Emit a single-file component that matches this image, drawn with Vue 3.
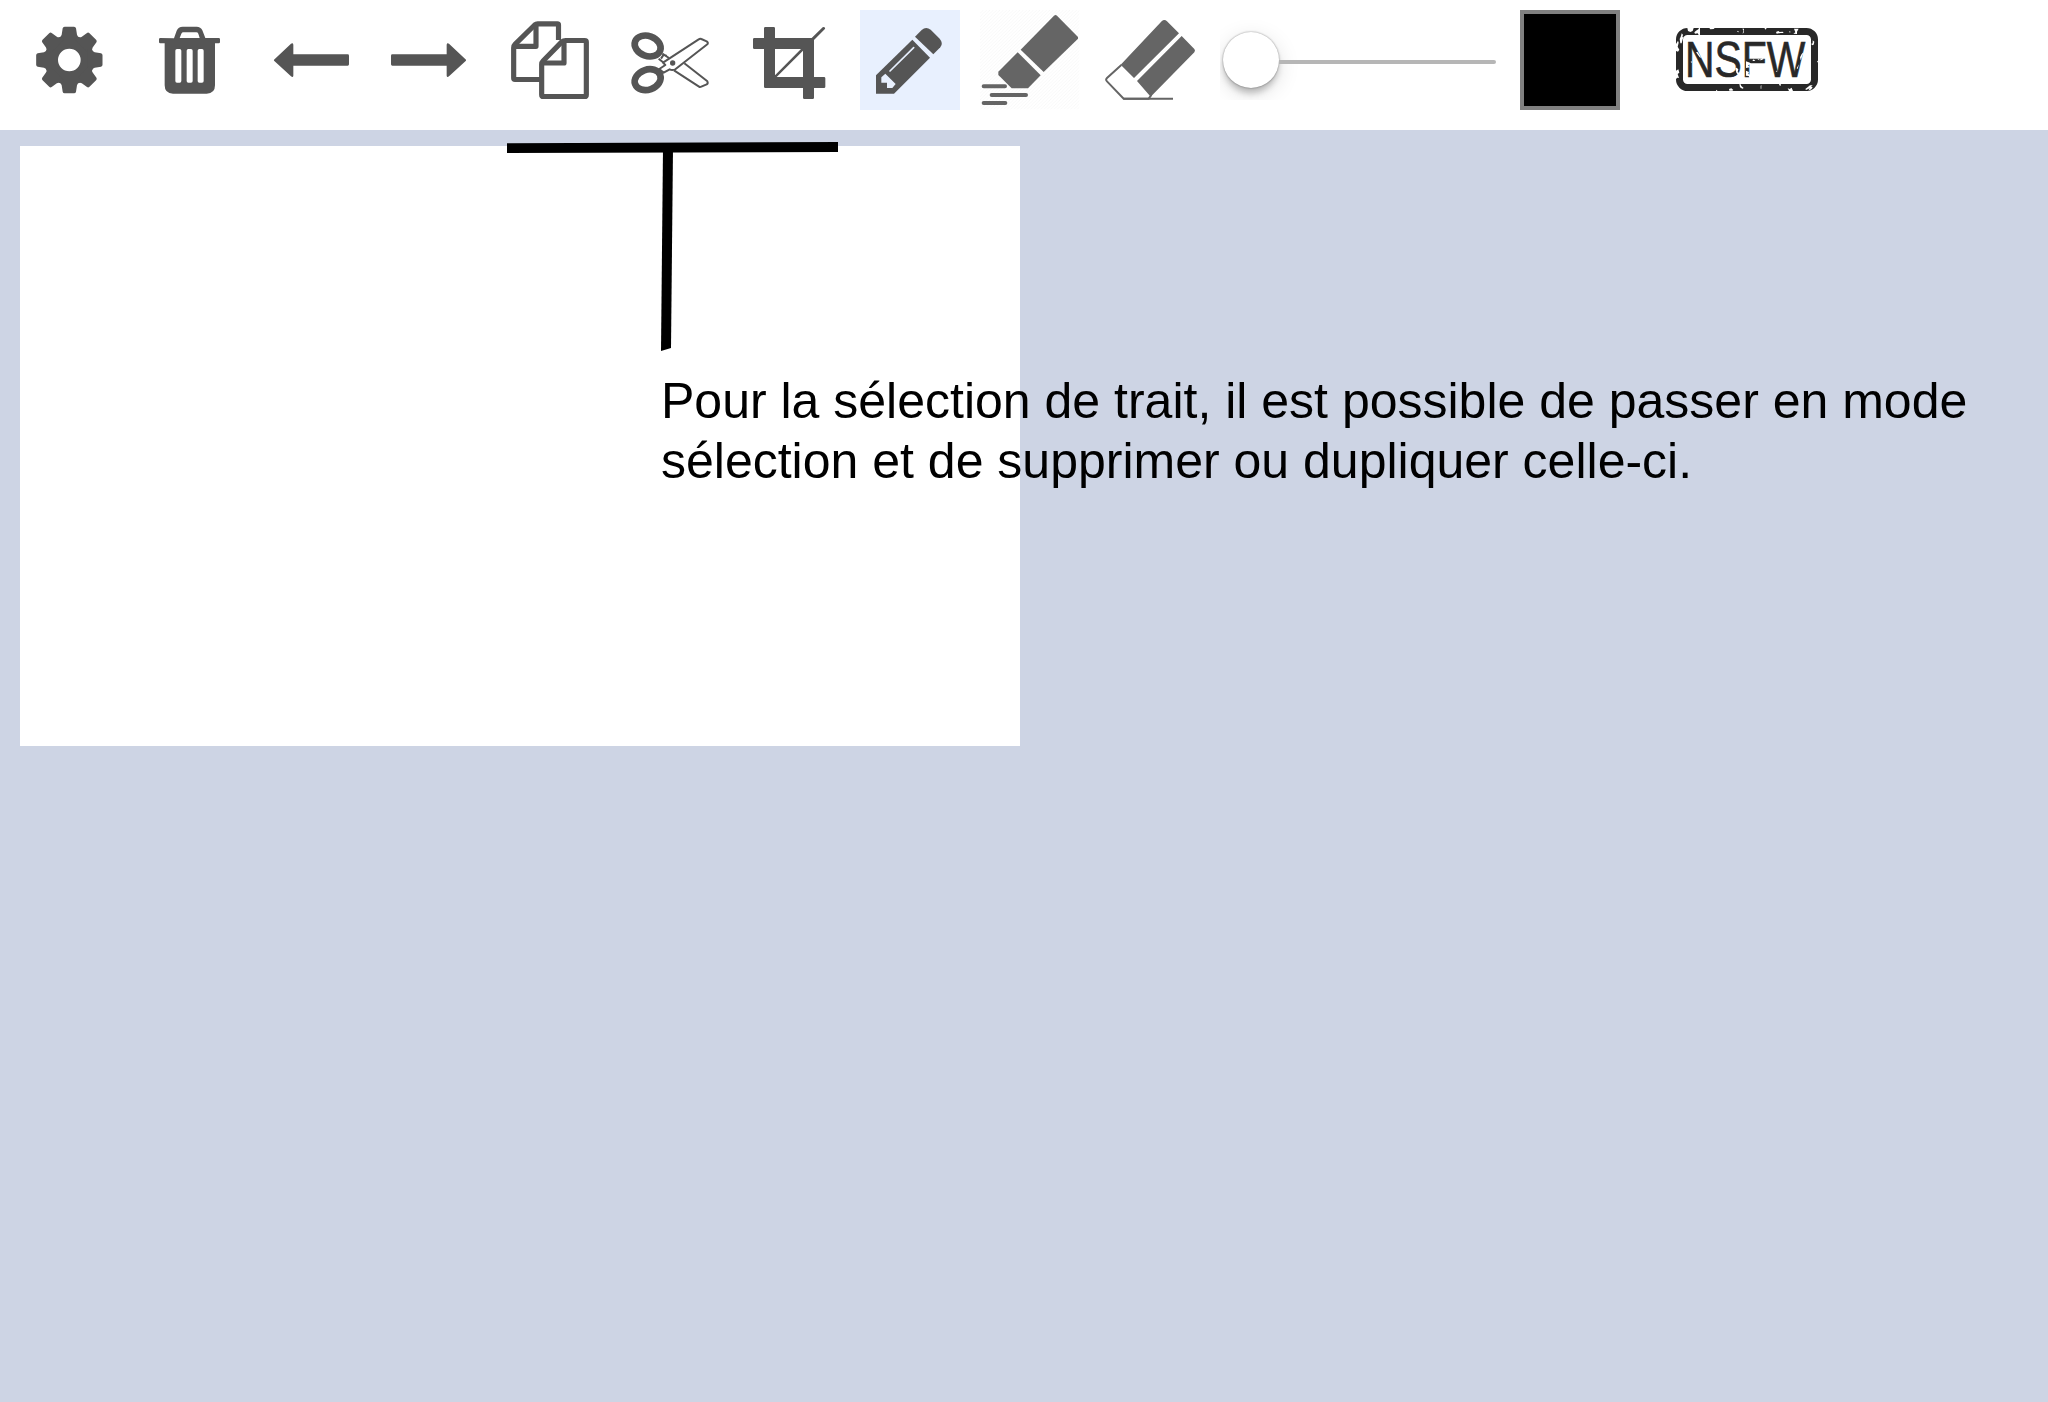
<script setup>
const teeth = [0, 45, 90, 135, 180, 225, 270, 315]
</script>

<template>
  <div class="app">
    <header class="toolbar">
      <button class="tool" aria-label="Paramètres">
        <svg viewBox="60 30 300 300">
          <circle cx="208" cy="180" r="53" fill="none" stroke="#555" stroke-width="38" />
          <path
            v-for="a in teeth"
            :key="a"
            :transform="`rotate(${a} 208 180)`"
            d="M194 80.500H222Q227 80.500 228 85L231 104Q232 110 240 113V125H176V113Q184 110 185 104L188 85Q189 80.500 194 80.500Z"
          />
        </svg>
      </button>
      <button class="tool" aria-label="Supprimer">
        <svg viewBox="420 30 300 300">
          <path
            fill-rule="evenodd"
            d="M522 115L530 92Q535 80 548 80H590Q602 80 607 91L616 114H656Q660 114 660 118V126Q660 130 656 130H645V256Q645 281 620 281H519Q494 281 494 256V130H481Q477 130 477 126V118Q477 114 481 114ZM539 114H599L595 101Q593 97 589 97H550Q546 97 544 101ZM531 147Q526 147 526 152V243Q526 248 531 248H539Q544 248 544 243V152Q544 147 539 147ZM565 147Q560 147 560 152V243Q560 248 565 248H573Q578 248 578 243V152Q578 147 573 147ZM598 147Q593 147 593 152V243Q593 248 598 248H606Q611 248 611 243V152Q611 147 606 147Z"
          />
        </svg>
      </button>
      <button class="tool" aria-label="Annuler">
        <svg viewBox="60 30 300 300">
          <path d="M102 179L153 131Q159 127 160 134V163H323Q327 163 327 167V193Q327 197 323 197H160V227Q159 234 153 229L103 183Q101 181 102 179Z" />
        </svg>
      </button>
      <button class="tool" aria-label="Rétablir">
        <svg viewBox="420 30 300 300">
          <path d="M678 179L627 131Q621 127 620 134V163H457Q453 163 453 167V193Q453 197 457 197H620V227Q621 234 627 229L677 183Q679 181 678 179Z" />
        </svg>
      </button>
      <button class="tool" aria-label="Dupliquer">
        <svg viewBox="60 30 300 300">
          <g fill="none" stroke="#555" stroke-width="15.500" stroke-linejoin="round">
            <path d="M235.500 120V75Q235.500 71.500 232 71.500H173Q168 71.500 164 75L105 133Q101 137 101 143V234Q101 238.500 105 238.500H180" />
            <path d="M168 76V139H105" />
            <path d="M257 121.500H314Q319 121.500 319 126V284Q319 289.500 314 289.500H190Q185 289.500 185 284V193Q185 187 189 183L246 125Q250 121.500 257 121.500Z" fill="#fff" />
            <path d="M252 126V189H189" />
          </g>
        </svg>
      </button>
      <button class="tool" aria-label="Couper">
        <svg viewBox="420 30 300 300">
          <g fill="none" stroke="#555" stroke-linejoin="round">
            <path d="M582 211L657 260Q660 262 664 260L680 253Q685 250 682 244L613 190" stroke-width="6" />
            <path d="M536 176L551 188M547 161L567 174M543 176L551 164L560 168" stroke-width="6" />
            <path d="M549 188L656 118Q660 115 664 117L680 124Q686 128 682 133L607 191L586 208Q576 212 569 208L551 218L538 207L556 195Z" fill="#fff" stroke-width="6" />
            <ellipse cx="503" cy="138" rx="40" ry="30" transform="rotate(20 503 138)" stroke-width="20" />
            <ellipse cx="503" cy="239" rx="40" ry="30" transform="rotate(-20 503 239)" stroke-width="20" />
          </g>
          <circle cx="578" cy="189" r="8" />
        </svg>
      </button>
      <button class="tool" aria-label="Recadrer">
        <svg viewBox="60 30 300 300">
          <path
            fill-rule="evenodd"
            d="M132 114V85Q132 81 136 81H161Q165 81 165 85V114H275L308 82Q312 80 315 83Q316 86 314 88L282 120V231H312Q316 231 316 235V260Q316 264 312 264H282V293Q282 297 278 297H253Q249 297 249 293V264H136Q132 264 132 260V147H103Q99 147 99 143V118Q99 114 103 114ZM165 147V226L243 147ZM249 152L170 231H249Z"
          />
        </svg>
      </button>
      <button class="tool active" aria-label="Crayon">
        <svg viewBox="420 30 300 300">
          <path d="M585 110L605 90Q618 78 632 89L659 116Q671 130 661 142L640 163Z" />
          <path d="M577 119L630 173L522 281H468V226Z" />
          <path d="M510 213L581 143" stroke="#e8f0fe" stroke-width="5" stroke-linecap="round" />
          <path d="M496 221L527 252L517 264H501V248H484V232Z" fill="#e8f0fe" />
        </svg>
      </button>
      <button class="tool" aria-label="Surligneur">
        <svg viewBox="60 30 300 300">
          <defs>
            <pattern id="hatch" width="10" height="10" patternUnits="userSpaceOnUse">
              <path d="M-1 11L11 -1" stroke="#f5f5f5" stroke-width="2" />
            </pattern>
          </defs>
          <path d="M60 30H358V328H60Z" fill="url(#hatch)" />
          <g fill="#656565">
            <path d="M182 149L282 47Q287 43 291 47L354 111V116L251 216Z" />
            <path d="M173 157L242 226L204 265H155L115 225V215Z" />
          </g>
          <path d="M71 259H135M95 285H198M71 309H136" stroke="#656565" stroke-width="12" stroke-linecap="round" />
        </svg>
      </button>
      <button class="tool" aria-label="Gomme">
        <svg viewBox="420 30 300 300">
          <path d="M484 195L441 234Q436 239 441 244L491 296H566L574 285" fill="none" stroke="#656565" stroke-width="6" />
          <path d="M490 296H639" stroke="#656565" stroke-width="6" />
          <g fill="#656565">
            <path d="M482 194L605 64Q613 56 621 64L657 100L522 234Z" />
            <path d="M665 108L703 147Q707 151 703 157L572 290L531 243Z" />
          </g>
        </svg>
      </button>
      <div class="slider"><span class="thumb"></span><span class="track"></span></div>
      <div class="swatch"></div>
      <svg class="stamp" viewBox="528 84 426 189">
        <rect x="538.500" y="94.500" width="405" height="168" rx="24" fill="none" stroke="#282828" stroke-width="21" />
        <text transform="translate(555 231) scale(0.807 1)">NSFW</text>
        <g fill="#fff">
          <path d="M528 132L534 122L536 128L533 140L538 149L534 155L528 153ZM539 117L543 108L545 100L549 104L547 112L551 110L548 118L545 130L541 130ZM562 84H581L578 93L571 96L564 93ZM583 97L588 92L595 88L597 84H600V105H596L593 100L585 101Z" />
          <path d="M628 84H644L641 87L631 88ZM727 86L730 91L728 101L731 98L732 86ZM711 95L714 92L717 97ZM793 84L797 89L800 84ZM828 96L835 93L839 96L848 95L851 99L842 99L830 101ZM868 92L872 96L869 98ZM882 86H896L891 95L891 102L880 101L886 97Z" />
          <path d="M938 121L943 125L941 134L936 136L934 131L938 130ZM951 184L954 182V188ZM528 212L535 208L538 218L533 222L537 234L532 233L528 237Z" />
          <path d="M648 273V269L653 273ZM687 267L694 265L700 270L697 272H688ZM718 251H721L724 258L731 264L727 266L720 262ZM782 257L784 255V266H782ZM837 251L843 246L842 258L838 256ZM863 265L869 267L875 263L879 273H867ZM916 267L930 256L938 256L933 261L938 261L934 268L925 272L929 265L918 270Z" />
          <path d="M588 157L593 156L604 173L599 172ZM582 171L584 169L583 178L592 178L582 181ZM572 185L576 184L574 190ZM584 202L588 196L592 201L586 205ZM706 205L710 203L715 208L713 216L718 220L714 224L709 218Z" />
          <path d="M738 184L750 188L753 192L744 196L750 202L738 204ZM757 183L761 178L766 183ZM773 176L779 180L788 174L791 177L783 181L774 180ZM738 212L747 216L745 222L753 225L759 220L761 233H749L746 228L738 227ZM900 172L905 162L911 157L906 170L902 181ZM890 205L897 193L893 207ZM827 213L832 212L831 216Z" />
        </g>
      </svg>
    </header>
    <main class="workspace">
      <div class="canvas"></div>
      <svg class="callout" width="340" height="220" viewBox="503 136 340 220">
        <path d="M507 143.300L838 142V152L507 153Z" />
        <path d="M663 148H673L671 348L661 351Z" />
      </svg>
      <p class="note">Pour la sélection de trait, il est possible de passer en mode<br />sélection et de supprimer ou dupliquer celle-ci.</p>
    </main>
  </div>
</template>

<style>
body {
  margin: 0;
}
</style>

<style scoped>
.app {
  display: flex;
  flex-direction: column;
  width: 2048px;
  height: 1402px;
  overflow: hidden;
  background: #cdd4e4;
  font-family: "Liberation Sans", Arial, sans-serif;
}
.toolbar {
  display: flex;
  align-items: center;
  gap: 20px;
  height: 130px;
  box-sizing: border-box;
  padding: 0 20px 10px;
  background: #fff;
}
.tool {
  flex: none;
  width: 100px;
  height: 100px;
  padding: 0;
  border: 0;
  background: none;
}
.tool.active {
  background: #e8f0fe;
}
.tool svg {
  display: block;
  width: 100px;
  height: 100px;
  fill: #555;
}
.slider {
  display: flex;
  align-items: center;
  flex: none;
  width: 280px;
  height: 80px;
  overflow: hidden;
}
.thumb {
  flex: none;
  width: 56px;
  height: 56px;
  margin-left: 3px;
  border-radius: 50%;
  background: #fff;
  box-shadow: 0 0 2px rgba(0, 0, 0, 0.45), 0 6px 6px -1px rgba(0, 0, 0, 0.22), 0 6px 22px rgba(0, 0, 0, 0.13);
}
.track {
  width: 217px;
  height: 4px;
  margin-top: 4px;
  border-radius: 0 2px 2px 0;
  background: #b6b6b6;
}
.swatch {
  flex: none;
  width: 92px;
  height: 92px;
  border: 4px solid #808080;
  background: #000;
}
.stamp {
  flex: none;
  width: 142px;
  height: 63px;
  margin: 0 0 1px 36px;
  overflow: visible;
}
.stamp text {
  font-size: 152px;
  fill: #282828;
  stroke: #282828;
  stroke-width: 2px;
}
.workspace {
  position: relative;
  flex: 1;
  padding: 16px 20px;
}
.canvas {
  width: 1000px;
  height: 600px;
  background: #fff;
}
.callout {
  position: absolute;
  left: 503px;
  top: 6px;
}
.note {
  position: absolute;
  left: 661px;
  top: 241px;
  margin: 0;
  font-size: 50px;
  line-height: 60px;
  white-space: nowrap;
  color: #000;
}
</style>
